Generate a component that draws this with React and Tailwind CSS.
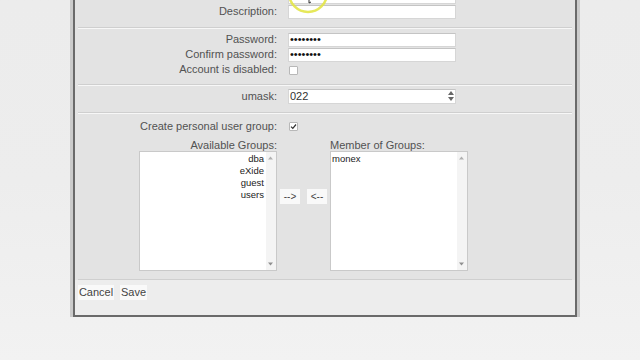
import React from "react";

const font = { fontFamily: '"Liberation Sans", Arial, sans-serif' };

function Label({ children }) {
  return (
    <div className="w-[199px] shrink-0 text-right text-[11px] leading-[15px] text-[#525252]">
      {children}
    </div>
  );
}

function TextInput({ value, password }) {
  return (
    <div className="ml-[11px] h-[14px] w-[168px] bg-white border border-[#d6d6d6] border-t-[#c4c4c4] flex items-center px-[1px]">
      {password ? (
        <span className="text-[11px] leading-none text-[#111]">••••••••</span>
      ) : (
        <span className="text-[11px] leading-none text-[#333]">{value}</span>
      )}
    </div>
  );
}

function Checkbox({ checked }) {
  return (
    <div className="ml-[12px] mt-[1px] h-[9px] w-[9px] bg-white border border-[#b8b8b8] rounded-[1px] flex items-center justify-center">
      {checked && (
        <svg width="7" height="7" viewBox="0 0 7 7">
          <path d="M1 3.6 L2.8 5.4 L6 1.5" stroke="#333" strokeWidth="1.2" fill="none" />
        </svg>
      )}
    </div>
  );
}

function Row({ label, children }) {
  return (
    <div className="flex h-[15px] items-center">
      <Label>{label}</Label>
      {children}
    </div>
  );
}

function Section({ children, className = "" }) {
  return (
    <div className={"mx-[3px] border-t border-t-[#f7f7f7] border-b border-b-[#cfcfcf] " + className}>
      {children}
    </div>
  );
}

function ListBox({ items, align }) {
  return (
    <div className="relative h-[120px] w-[138px] bg-white border border-[#c9c9c9] shrink-0">
      <div className={"pt-[1px] " + (align === "right" ? "pr-[12px] text-right" : "pl-[1px] text-left")}>
        {items.map((it) => (
          <div key={it} className="text-[9.5px] leading-[12px] text-[#222]">
            {it}
          </div>
        ))}
      </div>
      <div className="absolute right-0 top-0 bottom-0 w-[10px] bg-[#f4f4f4]">
        <svg className="absolute left-[2px] top-[4px]" width="5" height="4" viewBox="0 0 5 4">
          <path d="M0 3.5 L2.5 0.5 L5 3.5 Z" fill="#b0b0b0" />
        </svg>
        <svg className="absolute left-[2px] bottom-[4px]" width="5" height="4" viewBox="0 0 5 4">
          <path d="M0 0.5 L2.5 3.5 L5 0.5 Z" fill="#909090" />
        </svg>
      </div>
    </div>
  );
}

function SmallButton({ children, className = "" }) {
  return (
    <div
      className={
        "h-[15px] bg-[#f9f9f9] text-[10px] leading-[15px] text-[#444] text-center shrink-0 " + className
      }
    >
      {children}
    </div>
  );
}

export default function App() {
  return (
    <div
      className="relative w-[640px] h-[360px] overflow-hidden bg-gradient-to-b from-[#ececec] via-[#ededed] to-[#f2f2f2]"
      style={font}
    >
      <div className="ml-[70px] w-[510px] bg-[#cbcbcb] px-[3px] -mt-[16px]">
        <div className="w-[504px] border-2 border-t-0 border-[#6a6a6a] bg-[#e3e3e3]">
          {/* Section 1 */}
          <Section className="pt-[5px] pb-[8px] border-t-0">
            <Row label="Full name:">
              <TextInput value="" />
            </Row>
            <Row label="Description:">
              <TextInput value="" />
            </Row>
          </Section>
          {/* Section 2 */}
          <Section className="pt-[3px] pb-[7px]">
            <Row label="Password:">
              <TextInput password />
            </Row>
            <Row label="Confirm password:">
              <TextInput password />
            </Row>
            <Row label="Account is disabled:">
              <Checkbox />
            </Row>
          </Section>
          {/* Section 3 */}
          <Section className="pt-[3px] pb-[8px]">
            <div className="flex h-[15px] items-center">
              <Label>umask:</Label>
              <div className="relative ml-[11px] h-[15px] w-[168px] bg-white border border-[#d6d6d6] border-t-[#c4c4c4] flex items-center px-[1px]">
                <span className="text-[11px] leading-none text-[#333]">022</span>
                <div className="absolute right-[1px] top-[1px] flex flex-col gap-[2px]">
                  <svg width="6" height="4" viewBox="0 0 6 4">
                    <path d="M0 4 L3 0 L6 4 Z" fill="#666" />
                  </svg>
                  <svg width="6" height="4" viewBox="0 0 6 4">
                    <path d="M0 0 L3 4 L6 0 Z" fill="#666" />
                  </svg>
                </div>
              </div>
            </div>
          </Section>
          {/* Section 4 */}
          <Section className="pt-[5px] pb-[8px]">
            <div className="flex h-[14px] items-center">
              <Label>Create personal user group:</Label>
              <Checkbox checked />
            </div>
            <div className="mt-[6px] flex h-[12px] items-center">
              <Label>Available Groups:</Label>
              <div className="ml-[53px] text-[11px] leading-[12px] text-[#525252]">Member of Groups:</div>
            </div>
            <div className="flex items-start">
              <div className="ml-[61px]">
                <ListBox items={["dba", "eXide", "guest", "users"]} align="right" />
              </div>
              <SmallButton className="ml-[3px] mt-[38px] w-[20px]">--&gt;</SmallButton>
              <SmallButton className="ml-[7px] mt-[38px] w-[20px]">&lt;--</SmallButton>
              <div className="ml-[3px]">
                <ListBox items={["monex"]} align="left" />
              </div>
            </div>
          </Section>
          {/* Buttons */}
          <div className="bg-[#ededed] h-[35px] pt-[5px] pl-[3px] flex gap-[6px] items-start">
            <SmallButton className="w-[36px] text-[11px]">Cancel</SmallButton>
            <SmallButton className="w-[27px] text-[11px]">Save</SmallButton>
          </div>
        </div>
      </div>

      {/* cursor highlight */}
      <svg className="absolute left-[280px] top-0" width="60" height="20" viewBox="0 0 60 20">
        <circle cx="28" cy="-7" r="19" fill="none" stroke="#e3e648" strokeWidth="2.5" opacity="0.9" />
        <path d="M29 -2 L29 3 L31 2" stroke="#333" strokeWidth="1" fill="none" />
      </svg>
    </div>
  );
}
